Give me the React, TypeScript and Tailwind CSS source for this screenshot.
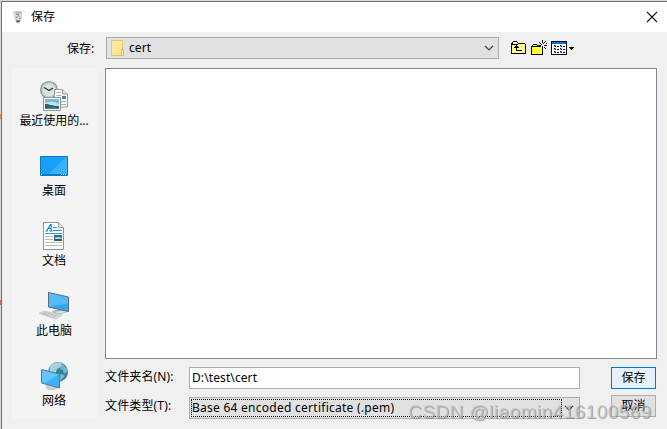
import type { ReactNode } from "react";

function AppIcon() {
  return (
    <svg width="16" height="16" viewBox="0 0 16 16">
      <path d="M1 2.5 10 2 9.5 10 7.5 12 4 12 2.5 9.5Z" fill="#b5bfbc" />
      <path d="M1 2.5 3 3.5 4 11 2.5 9Z" fill="#dde3e4" />
      <path d="M3 4.5h6l-.6 5.2-2 1.6-2-1.2Z" fill="#dfe9e4" />
      <path d="M4 4.5 6 4l1.5 1-1 1.5L4 6Z" fill="#89a7a4" />
      <path d="M4 7.5h1.5V9H4z" fill="#4aa88a" />
      <path d="M6 6.3h1.4v1.5H6z" fill="#d9787a" />
      <path d="M7 8.5h1.3V10H7z" fill="#6388c9" />
      <path d="M3.5 11.5h5l-1.5 2H5Z" fill="#555" />
      <path d="M9 3.5C10 .8 12.5 1.5 13 3.8" fill="none" stroke="#dcdedf" />
    </svg>
  );
}

function FolderIcon() {
  return (
    <svg width="14" height="18" viewBox="0 0 14 18">
      <path d="M.5 1.500h11v10h1v5H.5Z" fill="#ffe591" stroke="#ecc550" />
      <path d="M1.200 2.200h9.600v7L1.200 15Z" fill="#ffe9a2" />
      <path d="M10.500 16.500v-6h2v6Z" fill="#fff0b5" stroke="#e7ba3d" />
    </svg>
  );
}

function UpIcon() {
  return (
    <svg width="16" height="14" viewBox="0 0 16 14" shapeRendering="crispEdges">
      <defs>
        <pattern id="upDither" width="2" height="2" patternUnits="userSpaceOnUse">
          <path d="M0 0h2v2H0z" fill="#ffff66" />
          <path d="M0 0h1v1H0zM1 1h1v1H1z" fill="#fffcb4" />
        </pattern>
      </defs>
      <path d="M1 1h1V0h4v1h1v1h7v1h1v10H0V2h1Z" fill="#000" />
      <path d="M2 1h4v1h1v1h7v9H1V3h1Z" fill="url(#upDither)" />
      <path d="M1 3h6v1H1z" fill="#000" />
      <path d="M5 4h1v1h1v1h1v1H6v2h5v1H5V7H3V6h1V5h1Z" fill="#000" />
    </svg>
  );
}

function NewFolderIcon() {
  return (
    <svg width="17" height="16" viewBox="0 0 17 16" shapeRendering="crispEdges">
      <defs>
        <pattern id="newDither" width="2" height="2" patternUnits="userSpaceOnUse">
          <path d="M0 0h2v2H0z" fill="#ffff40" />
          <path d="M0 0h1v1H0z" fill="#fffa99" />
        </pattern>
      </defs>
      <path d="M1 5h1V4h4v1h1v1h5v9H0V6h1Z" fill="#000" />
      <path d="M2 5h4v1h5v8H1V6h1Z" fill="url(#newDither)" />
      <path d="M1 6h10v1H1z" fill="#000" />
      <path d="M10 5h3v3h-3z" fill="#f0f0f0" />
      <path d="M11 0h1v3h-1zM11 6h1v3h-1zM7 5h3v1H7zM13 5h3v1h-3zM8 2h1v1H8zM9 3h1v1H9zM14 1h1v1h-1zM13 2h1v1h-1zM12 3h1v1h-1zM13 7h1v1h-1zM14 8h1v1h-1zM10 4h1v1h-1zM15 3h1v1h-1z" fill="#111" />
    </svg>
  );
}

function ViewIcon() {
  return (
    <svg width="25" height="14" viewBox="0 0 25 14" shapeRendering="crispEdges">
      <path d="M0 0h16v14H0z" fill="#000" />
      <path d="M1 1h14v2H1z" fill="#0078d7" />
      <path d="M1 3h14v10H1z" fill="#fff" />
      <path d="M3 4h2v2H3zM9 4h2v2H9zM3 7h2v2H3zM9 7h2v2H9zM3 10h2v2H3zM9 10h2v2H9z" fill="#8c90c8" />
      <path d="M3 4h1v1H3zM4 5h1v1H4zM9 4h1v1H9zM10 5h1v1h-1zM3 7h1v1H3zM4 8h1v1H4zM9 7h1v1H9zM10 8h1v1h-1zM3 10h1v1H3zM4 11h1v1H4zM9 10h1v1H9zM10 11h1v1h-1z" fill="#10107c" />
      <path d="M6 5h2v1H6zM12 5h2v1h-2zM6 8h2v1H6zM12 8h2v1h-2zM6 11h2v1H6zM12 11h2v1h-2z" fill="#000" />
      <path d="M18 6h5v1h-1v1h-1v1h-1V8h-1V7h-1Z" fill="#000" />
    </svg>
  );
}

function RecentIcon() {
  return (
    <svg width="32" height="32" viewBox="0 0 32 32">
      <circle cx="11" cy="10" r="8.400" fill="#cbd1d2" stroke="#93999b" strokeWidth="1.400" />
      <circle cx="11" cy="10" r="6.600" fill="#dce2e2" stroke="#adb3b6" strokeWidth=".8" strokeDasharray="1 1.200" />
      <path d="m6 7.500 5 3 4-2.500" fill="none" stroke="#333" strokeWidth="1.300" />
      <path d="M16.500 9.500h8l5 4.500v13h-13Z" fill="#fdfdfd" stroke="#999" />
      <path d="M24.500 9.500V14h5" fill="#ddd" stroke="#999" />
      <path d="M18.500 12.500h4M18.500 15.500h5M18.500 18.500h4M23 21.500h5M23 24.500h5" stroke="#aaa" />
      <path d="M24 16h4v3h-4z" fill="#4083b3" />
      <path d="M5.500 17.500h17v13h-17z" fill="#fff" stroke="#929292" />
      <path d="M7 19h14v10H7z" fill="#75b9e4" />
      <path d="M7 23q7-3 14 1v2H7Z" fill="#bee3ef" />
      <path d="M7 24c5 0 6 2 14 2v3H7Z" fill="#35634b" />
      <path d="M7 28q8-2 14 0v1H7Z" fill="#337aa5" />
    </svg>
  );
}

function DesktopIcon() {
  return (
    <svg width="32" height="32" viewBox="0 0 32 32">
      <path d="M2.500 6.500h27v19h-27z" fill="#18a0f9" stroke="#087bbf" />
      <path d="M11 24 28 7h1v17Z" fill="#39b0ff" />
      <path d="M3 24h26v1H3z" fill="#0879bb" />
      <path d="M3 24h1v1H3zM23 24h1v1h-1zM25 24h1v1h-1zM27 24h1v1h-1z" fill="#fff" />
    </svg>
  );
}

function DocumentIcon() {
  return (
    <svg width="32" height="32" viewBox="0 0 32 32">
      <path d="M5.500 2.500h15l5 5v22h-20Z" fill="#fff" stroke="#929292" />
      <path d="M20.500 2.500v5h5" fill="#e6e6e6" stroke="#999" />
      <path d="m8.500 11 4-6.500h.7V11M10 8.500h3M7.500 11h2.300m1.700 0h3" fill="none" stroke="#087fc5" strokeWidth="1.100" />
      <path d="M15 7.500h4M15 10.500h9M7 13.500h17" stroke="#259ee0" />
      <path d="M7 16.500h8M7 19.500h8M7 22.500h17M7 25.500h17" stroke="#bbb" />
      <path d="M16 15h8v6h-8z" fill="#246ba1" />
      <path d="M16 18q4-2 8 0v1h-8Z" fill="#a7d8ed" />
      <path d="M16 18q3 2 8 1v2h-8Z" fill="#32613c" />
    </svg>
  );
}

function ComputerIcon() {
  return (
    <svg width="32" height="32" viewBox="0 0 32 32">
      <path d="m14 21 9-2 3 1-10 3Z" fill="#a9b6bd" />
      <path d="m15 22 9-2 6 1.500-8 2.500Z" fill="#d8e0e4" stroke="#98a5ad" strokeWidth=".6" />
      <path d="m10.500 2.500 20 4.500v14.500l-20-4.500Z" fill="#32a8f5" stroke="#586f7e" />
      <path d="m11 3.200 18.800 4.200v6L11 16.500Z" fill="#57bbfb" />
      <path d="m1 23.500 5-2.500 18 4-6 4Z" fill="#dce0e2" stroke="#bbc1c5" strokeWidth=".7" />
      <path d="m3 23 15 4M5 22l16 4M5 25l4-3m-1 4 4-3m-1 4 4-3m-1 4 4-3" stroke="#aab0b4" strokeWidth=".6" />
    </svg>
  );
}

function NetworkIcon() {
  return (
    <svg width="32" height="32" viewBox="0 0 32 32">
      <circle cx="20" cy="12" r="10" fill="#347f9f" />
      <path d="M12 6c5-5 10-4 12-3l-1 4-4 2-2 6-6-2Z" fill="#a6d1de" />
      <path d="m24 3 5 6v3l-3 2-1-4-3-1ZM19 15l5-1 3 2-5 5-3-1Z" fill="#77b5ca" />
      <path d="m9 25 7 1 3 2c-3 2-8 2-11 0Z" fill="#cad4d8" stroke="#a5b1b8" strokeWidth=".6" />
      <path d="m3.500 9.500 18 4.500v14l-18-5Z" fill="#3eb0f5" stroke="#58788d" />
      <path d="m4.200 10.500 16.500 4-14 8.300-2.500-.6Z" fill="#68c5ff" />
    </svg>
  );
}

function Place({ icon, label, wide }: { icon: ReactNode; label: string; wide?: boolean }) {
  return (
    <div className="flex h-[70px] flex-col items-center">
      {icon}
      <span className={`mt-px h-4 whitespace-nowrap leading-4 ${wide ? "tracking-[-0.05px]" : ""}`}>{label}</span>
    </div>
  );
}

function Chevron() {
  return (
    <svg width="10" height="6" viewBox="0 0 10 6" fill="none" stroke="#444" strokeWidth="1.200">
      <path d="m1 1 4 4 4-4" />
    </svg>
  );
}

export default function App() {
  return (
    <div className="relative h-[429px] w-[667px] overflow-hidden bg-[#d9d9d9] pl-px pt-px font-['Noto_Sans','Noto_Sans_CJK_SC',sans-serif] text-xs text-black">
      <div className="flex h-full flex-col border-l border-t border-[#707070] bg-[#f0f0f0]">
        <header className="flex h-[30px] shrink-0 items-center bg-white pl-[10px] pr-[9px]">
          <AppIcon />
          <span className="ml-[3px] leading-4">保存</span>
          <svg className="ml-auto" width="12" height="12" viewBox="0 0 12 12" stroke="#111" strokeWidth="1.100">
            <path d="m1 1 10 10M11 1 1 11" />
          </svg>
        </header>
        <div className="flex h-[36px] shrink-0 pt-[5px]">
          <span className="ml-[65px] mt-1 w-[39px] leading-4">保存:</span>
          <div className="flex h-[22px] w-[393px] items-center border border-[#adadad] bg-[#e1e1e1] pl-1 pr-[4px]">
            <FolderIcon />
            <span className="ml-1 leading-4 tracking-[0.1px]">cert</span>
            <span className="ml-auto"><Chevron /></span>
          </div>
          <div className="ml-3 mt-1 flex items-start">
            <UpIcon />
            <span className="-mt-px ml-1"><NewFolderIcon /></span>
            <span className="ml-[3px]"><ViewIcon /></span>
          </div>
        </div>
        <div className="flex pl-[10px]">
          <nav className="h-[351px] w-[85px] bg-[#f4f4f4] pr-px pt-3">
            <Place icon={<RecentIcon />} label="最近使用的..." wide />
            <Place icon={<DesktopIcon />} label="桌面" />
            <Place icon={<DocumentIcon />} label="文档" />
            <Place icon={<ComputerIcon />} label="此电脑" />
            <Place icon={<NetworkIcon />} label="网络" />
          </nav>
          <main className="ml-2">
            <div className="h-[291px] w-[552px] border border-[#828790] bg-white" />
            <div className="mt-2 flex">
              <label className="mt-[2px] w-[84px] leading-4 tracking-[0.15px]">文件夹名(N):</label>
              <div className="h-[22px] w-[391px] border border-[#adadad] bg-white pl-[2px] leading-5 tracking-[0.1px]">D:\test\cert</div>
              <button className="ml-[31px] h-[22px] w-[45px] border border-[#0078d7] bg-[#e5f1fb] leading-5">保存</button>
            </div>
            <div className="mt-[6px] flex">
              <label className="mt-[3px] w-[84px] leading-4 tracking-[0.15px]">文件类型(T):</label>
              <div className="mt-[2px] flex h-[22px] w-[391px] items-center justify-between border border-[#adadad] bg-[#e1e1e1] pl-px pr-[5px]">
                <div className="h-[18px] w-[371px] border border-dotted border-black leading-4 tracking-[0.26px]">Base 64 encoded certificate (.pem)</div>
                <Chevron />
              </div>
              <button className="ml-[31px] h-[22px] w-[45px] border border-[#adadad] bg-[#e1e1e1] leading-5">取消</button>
            </div>
          </main>
        </div>
      </div>
      <div className="absolute left-0 top-[114px] h-[5px] w-px bg-[#d89a68]" />
      <div className="absolute left-0 top-[300px] h-[5px] w-px bg-[#d86758]" />
      <div className="absolute left-[408px] top-[400px] whitespace-nowrap font-['Liberation_Sans',sans-serif] text-[19px] leading-6 tracking-[0.45px] text-[#c4c4c4]/70 [text-shadow:1px_1px_0_#77777799]">CSDN @liaomin416100569</div>
    </div>
  );
}
